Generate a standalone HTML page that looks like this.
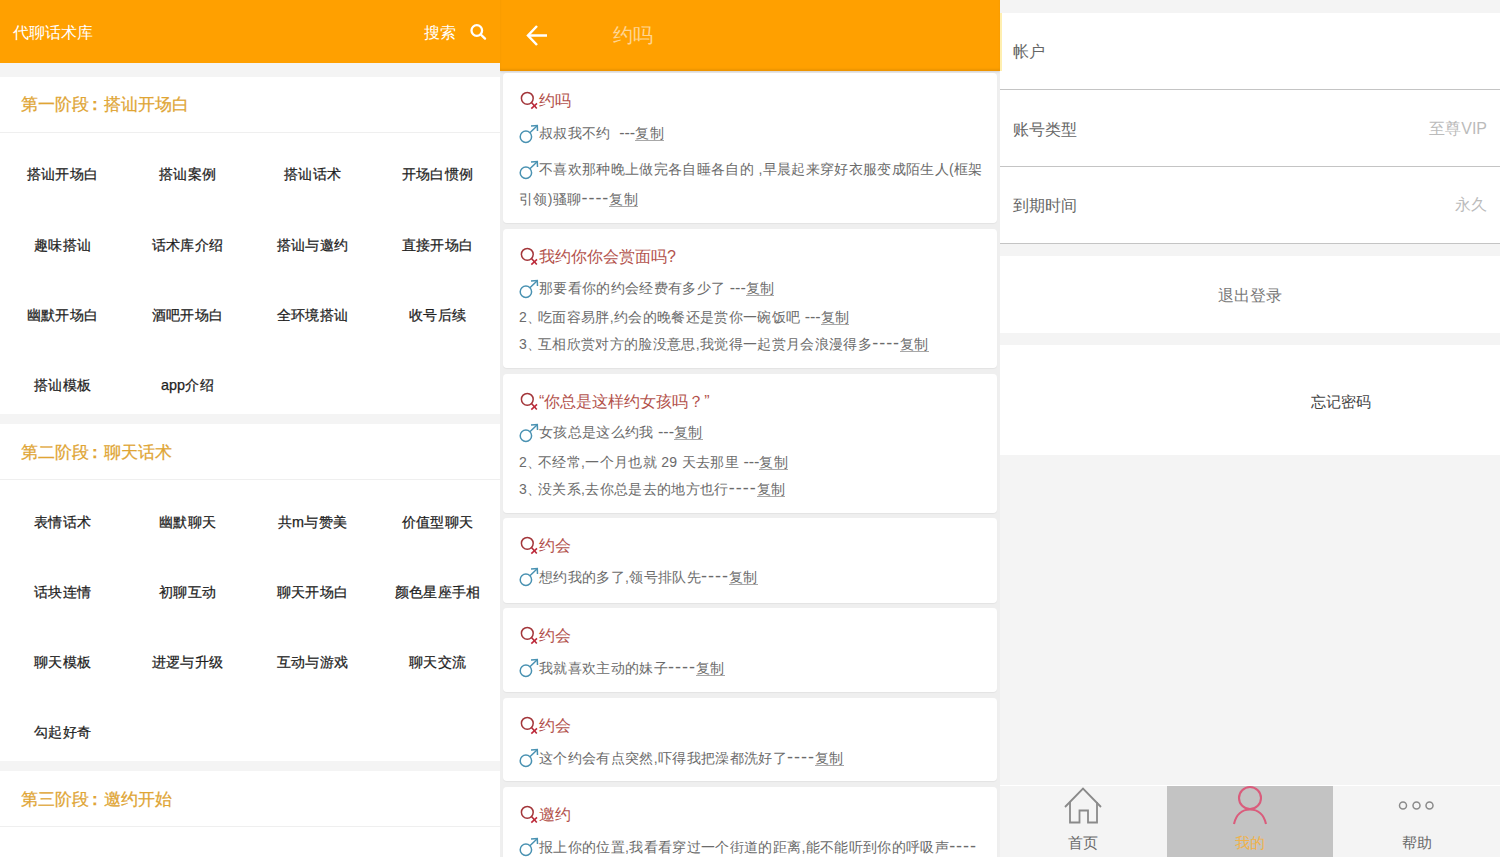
<!DOCTYPE html>
<html><head><meta charset="utf-8">
<style>
*{margin:0;padding:0;box-sizing:border-box}
html,body{width:1500px;height:857px;overflow:hidden;background:#fff;font-family:"Liberation Sans",sans-serif}
.a{position:absolute;white-space:nowrap}
#p1{position:absolute;left:0;top:0;width:500px;height:857px;background:#fff;overflow:hidden}
#p2{position:absolute;left:500px;top:0;width:500px;height:857px;background:#efefef;overflow:hidden}
#p3{position:absolute;left:1000px;top:0;width:500px;height:857px;background:#f4f4f4;overflow:hidden}
.hdr{position:absolute;left:0;top:0;width:500px;background:#FFA000}
.band{position:absolute;left:0;width:500px;background:#f4f4f4}
.stitle{position:absolute;left:21px;font-size:17px;color:#E0A534;line-height:20px}
.sline{position:absolute;left:0;width:500px;height:1px;background:#efefef}
.gi{position:absolute;width:125px;text-align:center;font-size:14.4px;line-height:16px;color:#1e1e1e}
.card{position:absolute;left:3px;width:494px;background:#fff;border-radius:4px;box-shadow:0 1px 1px rgba(0,0,0,0.05)}
.ct{position:absolute;left:36px;font-size:16px;line-height:18px;color:#B3524C}
.cl{position:absolute;left:36px;font-size:14px;line-height:16px;color:#6b6b6b;letter-spacing:0.35px}
.cn{position:absolute;left:16px;font-size:14px;line-height:16px;color:#6b6b6b;letter-spacing:0.35px}
.cp{text-decoration:underline;text-decoration-color:#999}
.row{position:absolute;left:0;width:500px;background:#fff}
.rl{position:absolute;left:13px;font-size:16px;line-height:18px;color:#666}
.rr{position:absolute;right:13px;font-size:16px;line-height:18px;color:#bbb}
.ic{position:absolute;width:22px;height:22px}
.ic svg{display:block}
.hl{position:absolute;left:0;width:500px;height:1px;background:#c4c4c4}
.d3{font-size:16px;letter-spacing:0}
.d4{font-size:18px;letter-spacing:1px}
.col{display:inline-block;width:15px;padding-left:3px;font-weight:bold}
.dn{margin-right:-3.5px}
.gi,.stitle{-webkit-text-stroke:0.25px currentColor}
i{font-style:normal;display:inline-block;width:1em;text-indent:0}
.cl i,.cn i{width:calc(1em + 0.35px)}
.cp{text-decoration:none;border-bottom:1px solid #a8a8a8;line-height:14px;display:inline-block}
</style></head><body>
<div id="p1">
  <div class="hdr" style="height:63px"></div>
  <div class="a" style="left:13px;top:23px;font-size:16px;line-height:19px;color:#fff"><i>代</i><i>聊</i><i>话</i><i>术</i><i>库</i></div>
  <div class="a" style="left:424px;top:23px;font-size:16px;line-height:19px;color:#fff"><i>搜</i><i>索</i></div>
  <svg class="a" style="left:469px;top:22px" width="20" height="20" viewBox="0 0 20 20"><circle cx="7.8" cy="8.5" r="5.3" fill="none" stroke="#fff" stroke-width="2.3"/><line x1="11.8" y1="12.5" x2="16" y2="16.6" stroke="#fff" stroke-width="2.4" stroke-linecap="round"/></svg>
  <div class="band" style="top:63px;height:14px"></div>

  <div class="stitle" style="top:95px"><i>第</i><i>一</i><i>阶</i><i>段</i><span class="col">:</span><i>搭</i><i>讪</i><i>开</i><i>场</i><i>白</i></div>
  <div class="sline" style="top:132px"></div>
  <div class="gi" style="left:0;top:166px"><i>搭</i><i>讪</i><i>开</i><i>场</i><i>白</i></div>
  <div class="gi" style="left:125px;top:166px"><i>搭</i><i>讪</i><i>案</i><i>例</i></div>
  <div class="gi" style="left:250px;top:166px"><i>搭</i><i>讪</i><i>话</i><i>术</i></div>
  <div class="gi" style="left:375px;top:166px"><i>开</i><i>场</i><i>白</i><i>惯</i><i>例</i></div>
  <div class="gi" style="left:0;top:237px"><i>趣</i><i>味</i><i>搭</i><i>讪</i></div>
  <div class="gi" style="left:125px;top:237px"><i>话</i><i>术</i><i>库</i><i>介</i><i>绍</i></div>
  <div class="gi" style="left:250px;top:237px"><i>搭</i><i>讪</i><i>与</i><i>邀</i><i>约</i></div>
  <div class="gi" style="left:375px;top:237px"><i>直</i><i>接</i><i>开</i><i>场</i><i>白</i></div>
  <div class="gi" style="left:0;top:307px"><i>幽</i><i>默</i><i>开</i><i>场</i><i>白</i></div>
  <div class="gi" style="left:125px;top:307px"><i>酒</i><i>吧</i><i>开</i><i>场</i><i>白</i></div>
  <div class="gi" style="left:250px;top:307px"><i>全</i><i>环</i><i>境</i><i>搭</i><i>讪</i></div>
  <div class="gi" style="left:375px;top:307px"><i>收</i><i>号</i><i>后</i><i>续</i></div>
  <div class="gi" style="left:0;top:377px"><i>搭</i><i>讪</i><i>模</i><i>板</i></div>
  <div class="gi" style="left:125px;top:377px">app<i>介</i><i>绍</i></div>
  <div class="band" style="top:414px;height:10px"></div>

  <div class="stitle" style="top:443px"><i>第</i><i>二</i><i>阶</i><i>段</i><span class="col">:</span><i>聊</i><i>天</i><i>话</i><i>术</i></div>
  <div class="sline" style="top:479px"></div>
  <div class="gi" style="left:0;top:514px"><i>表</i><i>情</i><i>话</i><i>术</i></div>
  <div class="gi" style="left:125px;top:514px"><i>幽</i><i>默</i><i>聊</i><i>天</i></div>
  <div class="gi" style="left:250px;top:514px"><i>共</i>m<i>与</i><i>赞</i><i>美</i></div>
  <div class="gi" style="left:375px;top:514px"><i>价</i><i>值</i><i>型</i><i>聊</i><i>天</i></div>
  <div class="gi" style="left:0;top:584px"><i>话</i><i>块</i><i>连</i><i>情</i></div>
  <div class="gi" style="left:125px;top:584px"><i>初</i><i>聊</i><i>互</i><i>动</i></div>
  <div class="gi" style="left:250px;top:584px"><i>聊</i><i>天</i><i>开</i><i>场</i><i>白</i></div>
  <div class="gi" style="left:375px;top:584px"><i>颜</i><i>色</i><i>星</i><i>座</i><i>手</i><i>相</i></div>
  <div class="gi" style="left:0;top:654px"><i>聊</i><i>天</i><i>模</i><i>板</i></div>
  <div class="gi" style="left:125px;top:654px"><i>进</i><i>逻</i><i>与</i><i>升</i><i>级</i></div>
  <div class="gi" style="left:250px;top:654px"><i>互</i><i>动</i><i>与</i><i>游</i><i>戏</i></div>
  <div class="gi" style="left:375px;top:654px"><i>聊</i><i>天</i><i>交</i><i>流</i></div>
  <div class="gi" style="left:0;top:724px"><i>勾</i><i>起</i><i>好</i><i>奇</i></div>
  <div class="band" style="top:761px;height:10px"></div>

  <div class="stitle" style="top:790px"><i>第</i><i>三</i><i>阶</i><i>段</i><span class="col">:</span><i>邀</i><i>约</i><i>开</i><i>始</i></div>
  <div class="sline" style="top:826px"></div>
</div>


<div id="p2">
  <div class="hdr" style="height:71px;box-shadow:inset 0 -2px 2px rgba(170,110,0,0.22),0 1px 2px rgba(80,60,60,0.18)"></div>
  <svg class="a" style="left:25px;top:23px" width="26" height="26" viewBox="0 0 26 26"><line x1="3.5" y1="12.5" x2="22" y2="12.5" stroke="#fff" stroke-width="2.5"/><polyline points="12,3 3,12.5 12,22" fill="none" stroke="#fff" stroke-width="2.5"/></svg>
  <div class="a" style="left:113px;top:24px;font-size:20px;line-height:22px;color:#FFD592"><i>约</i><i>吗</i></div>
<div class="card" style="top:73px;height:150px"><div class="ic" style="left:16px;top:18px"><svg width="22" height="22" viewBox="0 0 22 22"><circle cx="8.3" cy="7.3" r="5.9" fill="none" stroke="#A3363A" stroke-width="1.5"/><line x1="12.5" y1="11.5" x2="17.8" y2="17.6" stroke="#B32C38" stroke-width="1.6"/><line x1="12.3" y1="17.6" x2="18" y2="12.3" stroke="#C0283A" stroke-width="1.6"/></svg></div><div class="ct" style="top:19px"><i>约</i><i>吗</i></div><div class="ic" style="left:16px;top:50px"><svg width="22" height="22" viewBox="0 0 22 22"><circle cx="6.9" cy="13.8" r="5.7" fill="none" stroke="#4A92B2" stroke-width="1.5"/><line x1="10.9" y1="9.8" x2="18.2" y2="2.8" stroke="#4A92B2" stroke-width="1.5"/><polyline points="12,3 18.3,2.6 18.5,8" fill="none" stroke="#4A92B2" stroke-width="1.5"/></svg></div><div class="cl" style="top:52px"><i>叔</i><i>叔</i><i>我</i><i>不</i><i>约</i> &nbsp;<span class="d3">---</span><span class="cp"><i>复</i><i>制</i></span></div><div class="ic" style="left:16px;top:86px"><svg width="22" height="22" viewBox="0 0 22 22"><circle cx="6.9" cy="13.8" r="5.7" fill="none" stroke="#4A92B2" stroke-width="1.5"/><line x1="10.9" y1="9.8" x2="18.2" y2="2.8" stroke="#4A92B2" stroke-width="1.5"/><polyline points="12,3 18.3,2.6 18.5,8" fill="none" stroke="#4A92B2" stroke-width="1.5"/></svg></div><div class="cl" style="top:88px"><i>不</i><i>喜</i><i>欢</i><i>那</i><i>种</i><i>晚</i><i>上</i><i>做</i><i>完</i><i>各</i><i>自</i><i>睡</i><i>各</i><i>自</i><i>的</i> ,<i>早</i><i>晨</i><i>起</i><i>来</i><i>穿</i><i>好</i><i>衣</i><i>服</i><i>变</i><i>成</i><i>陌</i><i>生</i><i>人</i>(<i>框</i><i>架</i></div><div class="cn" style="top:117px"><i>引</i><i>领</i>)<i>骚</i><i>聊</i><span class="d4">----</span><span class="cp"><i>复</i><i>制</i></span></div></div><div class="card" style="top:229px;height:139px"><div class="ic" style="left:16px;top:18px"><svg width="22" height="22" viewBox="0 0 22 22"><circle cx="8.3" cy="7.3" r="5.9" fill="none" stroke="#A3363A" stroke-width="1.5"/><line x1="12.5" y1="11.5" x2="17.8" y2="17.6" stroke="#B32C38" stroke-width="1.6"/><line x1="12.3" y1="17.6" x2="18" y2="12.3" stroke="#C0283A" stroke-width="1.6"/></svg></div><div class="ct" style="top:19px"><i>我</i><i>约</i><i>你</i><i>你</i><i>会</i><i>赏</i><i>面</i><i>吗</i>?</div><div class="ic" style="left:16px;top:49px"><svg width="22" height="22" viewBox="0 0 22 22"><circle cx="6.9" cy="13.8" r="5.7" fill="none" stroke="#4A92B2" stroke-width="1.5"/><line x1="10.9" y1="9.8" x2="18.2" y2="2.8" stroke="#4A92B2" stroke-width="1.5"/><polyline points="12,3 18.3,2.6 18.5,8" fill="none" stroke="#4A92B2" stroke-width="1.5"/></svg></div><div class="cl" style="top:51px"><i>那</i><i>要</i><i>看</i><i>你</i><i>的</i><i>约</i><i>会</i><i>经</i><i>费</i><i>有</i><i>多</i><i>少</i><i>了</i> <span class="d3">---</span><span class="cp"><i>复</i><i>制</i></span></div><div class="cn" style="top:80px">2<span class="dn"><i>、</i></span><i>吃</i><i>面</i><i>容</i><i>易</i><i>胖</i>,<i>约</i><i>会</i><i>的</i><i>晚</i><i>餐</i><i>还</i><i>是</i><i>赏</i><i>你</i><i>一</i><i>碗</i><i>饭</i><i>吧</i> <span class="d3">---</span><span class="cp"><i>复</i><i>制</i></span></div><div class="cn" style="top:106px">3<span class="dn"><i>、</i></span><i>互</i><i>相</i><i>欣</i><i>赏</i><i>对</i><i>方</i><i>的</i><i>脸</i><i>没</i><i>意</i><i>思</i>,<i>我</i><i>觉</i><i>得</i><i>一</i><i>起</i><i>赏</i><i>月</i><i>会</i><i>浪</i><i>漫</i><i>得</i><i>多</i><span class="d4">----</span><span class="cp"><i>复</i><i>制</i></span></div></div><div class="card" style="top:374px;height:139px"><div class="ic" style="left:16px;top:18px"><svg width="22" height="22" viewBox="0 0 22 22"><circle cx="8.3" cy="7.3" r="5.9" fill="none" stroke="#A3363A" stroke-width="1.5"/><line x1="12.5" y1="11.5" x2="17.8" y2="17.6" stroke="#B32C38" stroke-width="1.6"/><line x1="12.3" y1="17.6" x2="18" y2="12.3" stroke="#C0283A" stroke-width="1.6"/></svg></div><div class="ct" style="top:19px">“<i>你</i><i>总</i><i>是</i><i>这</i><i>样</i><i>约</i><i>女</i><i>孩</i><i>吗</i><i>？</i>”</div><div class="ic" style="left:16px;top:48px"><svg width="22" height="22" viewBox="0 0 22 22"><circle cx="6.9" cy="13.8" r="5.7" fill="none" stroke="#4A92B2" stroke-width="1.5"/><line x1="10.9" y1="9.8" x2="18.2" y2="2.8" stroke="#4A92B2" stroke-width="1.5"/><polyline points="12,3 18.3,2.6 18.5,8" fill="none" stroke="#4A92B2" stroke-width="1.5"/></svg></div><div class="cl" style="top:50px"><i>女</i><i>孩</i><i>总</i><i>是</i><i>这</i><i>么</i><i>约</i><i>我</i> <span class="d3">---</span><span class="cp"><i>复</i><i>制</i></span></div><div class="cn" style="top:80px">2<span class="dn"><i>、</i></span><i>不</i><i>经</i><i>常</i>,<i>一</i><i>个</i><i>月</i><i>也</i><i>就</i> 29 <i>天</i><i>去</i><i>那</i><i>里</i> <span class="d3">---</span><span class="cp"><i>复</i><i>制</i></span></div><div class="cn" style="top:106px">3<span class="dn"><i>、</i></span><i>没</i><i>关</i><i>系</i>,<i>去</i><i>你</i><i>总</i><i>是</i><i>去</i><i>的</i><i>地</i><i>方</i><i>也</i><i>行</i><span class="d4">----</span><span class="cp"><i>复</i><i>制</i></span></div></div><div class="card" style="top:518px;height:85px"><div class="ic" style="left:16px;top:18px"><svg width="22" height="22" viewBox="0 0 22 22"><circle cx="8.3" cy="7.3" r="5.9" fill="none" stroke="#A3363A" stroke-width="1.5"/><line x1="12.5" y1="11.5" x2="17.8" y2="17.6" stroke="#B32C38" stroke-width="1.6"/><line x1="12.3" y1="17.6" x2="18" y2="12.3" stroke="#C0283A" stroke-width="1.6"/></svg></div><div class="ct" style="top:19px"><i>约</i><i>会</i></div><div class="ic" style="left:16px;top:48px"><svg width="22" height="22" viewBox="0 0 22 22"><circle cx="6.9" cy="13.8" r="5.7" fill="none" stroke="#4A92B2" stroke-width="1.5"/><line x1="10.9" y1="9.8" x2="18.2" y2="2.8" stroke="#4A92B2" stroke-width="1.5"/><polyline points="12,3 18.3,2.6 18.5,8" fill="none" stroke="#4A92B2" stroke-width="1.5"/></svg></div><div class="cl" style="top:50px"><i>想</i><i>约</i><i>我</i><i>的</i><i>多</i><i>了</i>,<i>领</i><i>号</i><i>排</i><i>队</i><i>先</i><span class="d4">----</span><span class="cp"><i>复</i><i>制</i></span></div></div><div class="card" style="top:608px;height:84px"><div class="ic" style="left:16px;top:18px"><svg width="22" height="22" viewBox="0 0 22 22"><circle cx="8.3" cy="7.3" r="5.9" fill="none" stroke="#A3363A" stroke-width="1.5"/><line x1="12.5" y1="11.5" x2="17.8" y2="17.6" stroke="#B32C38" stroke-width="1.6"/><line x1="12.3" y1="17.6" x2="18" y2="12.3" stroke="#C0283A" stroke-width="1.6"/></svg></div><div class="ct" style="top:19px"><i>约</i><i>会</i></div><div class="ic" style="left:16px;top:49px"><svg width="22" height="22" viewBox="0 0 22 22"><circle cx="6.9" cy="13.8" r="5.7" fill="none" stroke="#4A92B2" stroke-width="1.5"/><line x1="10.9" y1="9.8" x2="18.2" y2="2.8" stroke="#4A92B2" stroke-width="1.5"/><polyline points="12,3 18.3,2.6 18.5,8" fill="none" stroke="#4A92B2" stroke-width="1.5"/></svg></div><div class="cl" style="top:51px"><i>我</i><i>就</i><i>喜</i><i>欢</i><i>主</i><i>动</i><i>的</i><i>妹</i><i>子</i><span class="d4">----</span><span class="cp"><i>复</i><i>制</i></span></div></div><div class="card" style="top:698px;height:83px"><div class="ic" style="left:16px;top:18px"><svg width="22" height="22" viewBox="0 0 22 22"><circle cx="8.3" cy="7.3" r="5.9" fill="none" stroke="#A3363A" stroke-width="1.5"/><line x1="12.5" y1="11.5" x2="17.8" y2="17.6" stroke="#B32C38" stroke-width="1.6"/><line x1="12.3" y1="17.6" x2="18" y2="12.3" stroke="#C0283A" stroke-width="1.6"/></svg></div><div class="ct" style="top:19px"><i>约</i><i>会</i></div><div class="ic" style="left:16px;top:49px"><svg width="22" height="22" viewBox="0 0 22 22"><circle cx="6.9" cy="13.8" r="5.7" fill="none" stroke="#4A92B2" stroke-width="1.5"/><line x1="10.9" y1="9.8" x2="18.2" y2="2.8" stroke="#4A92B2" stroke-width="1.5"/><polyline points="12,3 18.3,2.6 18.5,8" fill="none" stroke="#4A92B2" stroke-width="1.5"/></svg></div><div class="cl" style="top:51px"><i>这</i><i>个</i><i>约</i><i>会</i><i>有</i><i>点</i><i>突</i><i>然</i>,<i>吓</i><i>得</i><i>我</i><i>把</i><i>澡</i><i>都</i><i>洗</i><i>好</i><i>了</i><span class="d4">----</span><span class="cp"><i>复</i><i>制</i></span></div></div><div class="card" style="top:787px;height:84px"><div class="ic" style="left:16px;top:18px"><svg width="22" height="22" viewBox="0 0 22 22"><circle cx="8.3" cy="7.3" r="5.9" fill="none" stroke="#A3363A" stroke-width="1.5"/><line x1="12.5" y1="11.5" x2="17.8" y2="17.6" stroke="#B32C38" stroke-width="1.6"/><line x1="12.3" y1="17.6" x2="18" y2="12.3" stroke="#C0283A" stroke-width="1.6"/></svg></div><div class="ct" style="top:19px"><i>邀</i><i>约</i></div><div class="ic" style="left:16px;top:49px"><svg width="22" height="22" viewBox="0 0 22 22"><circle cx="6.9" cy="13.8" r="5.7" fill="none" stroke="#4A92B2" stroke-width="1.5"/><line x1="10.9" y1="9.8" x2="18.2" y2="2.8" stroke="#4A92B2" stroke-width="1.5"/><polyline points="12,3 18.3,2.6 18.5,8" fill="none" stroke="#4A92B2" stroke-width="1.5"/></svg></div><div class="cl" style="top:51px"><i>报</i><i>上</i><i>你</i><i>的</i><i>位</i><i>置</i>,<i>我</i><i>看</i><i>看</i><i>穿</i><i>过</i><i>一</i><i>个</i><i>街</i><i>道</i><i>的</i><i>距</i><i>离</i>,<i>能</i><i>不</i><i>能</i><i>听</i><i>到</i><i>你</i><i>的</i><i>呼</i><i>吸</i><i>声</i><span class="d4">----</span></div></div>
</div>

<div id="p3">
  <div class="row" style="top:13px;height:76px"></div>
  <div class="hl" style="top:89px"></div>
  <div class="rl" style="top:43px"><i>帐</i><i>户</i></div>
  <div class="a" style="left:0;top:13px;width:1.5px;height:58px;background:#FFEFB0"></div>
  <div class="row" style="top:90px;height:76px"></div>
  <div class="hl" style="top:166px"></div>
  <div class="rl" style="top:121px"><i>账</i><i>号</i><i>类</i><i>型</i></div>
  <div class="rr" style="top:120px"><i>至</i><i>尊</i>VIP</div>
  <div class="row" style="top:167px;height:76px"></div>
  <div class="hl" style="top:243px"></div>
  <div class="rl" style="top:197px"><i>到</i><i>期</i><i>时</i><i>间</i></div>
  <div class="rr" style="top:196px"><i>永</i><i>久</i></div>

  <div class="row" style="top:256px;height:77px"></div>
  <div class="a" style="left:0;width:500px;top:287px;text-align:center;font-size:16px;line-height:18px;color:#777"><i>退</i><i>出</i><i>登</i><i>录</i></div>

  <div class="row" style="top:345px;height:110px"></div>
  <div class="a" style="left:311px;top:393px;font-size:15px;line-height:18px;color:#444"><i>忘</i><i>记</i><i>密</i><i>码</i></div>

  <div class="a" style="left:0;top:785px;width:500px;height:1px;background:#fff"></div>
  <div class="a" style="left:0;top:786px;width:500px;height:71px;background:#f4f4f4"></div>
  <div class="a" style="left:167px;top:786px;width:166px;height:71px;background:#c3c3c3"></div>

  <svg class="a" style="left:62px;top:786px" width="42" height="40" viewBox="0 0 42 40"><polyline points="3,21 21,2.5 39,21" fill="none" stroke="#8a8a8a" stroke-width="1.8"/><polyline points="8,16 8,36.5 17.5,36.5 17.5,24.5 26,24.5 26,36.5 35,36.5 35,16" fill="none" stroke="#8a8a8a" stroke-width="1.8"/></svg>
  <div class="a" style="left:0;width:166px;top:834px;text-align:center;font-size:15px;line-height:18px;color:#6a6a6a"><i>首</i><i>页</i></div>

  <svg class="a" style="left:225px;top:784px" width="50" height="42" viewBox="0 0 50 42"><circle cx="25" cy="14" r="11" fill="none" stroke="#DA5C7C" stroke-width="2.1"/><path d="M9,40 C11,31 17,25.5 25,25.5 C33,25.5 39,31 41,40" fill="none" stroke="#DA5C7C" stroke-width="2.1"/></svg>
  <div class="a" style="left:167px;width:166px;top:834px;text-align:center;font-size:15px;line-height:18px;color:#F0B24A"><i>我</i><i>的</i></div>

  <svg class="a" style="left:396px;top:798px" width="40" height="16" viewBox="0 0 40 16"><circle cx="7" cy="7.5" r="3.5" fill="none" stroke="#8a8a8a" stroke-width="1.5"/><circle cx="20.5" cy="7.5" r="3.5" fill="none" stroke="#8a8a8a" stroke-width="1.5"/><circle cx="33.5" cy="7.5" r="3.5" fill="none" stroke="#8a8a8a" stroke-width="1.5"/></svg>
  <div class="a" style="left:333px;width:167px;top:834px;text-align:center;font-size:15px;line-height:18px;color:#6a6a6a"><i>帮</i><i>助</i></div>
</div>

</body></html>
